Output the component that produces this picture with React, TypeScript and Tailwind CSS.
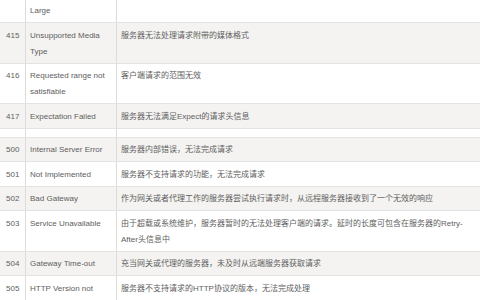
type Row = {
  code: string;
  name: string;
  desc: string;
};

const topRows: Row[] = [
  { code: '414', name: 'Request-URI Too Large', desc: '请求的URI过长（URI通常为网址），服务器无法处理' },
  { code: '415', name: 'Unsupported Media Type', desc: '服务器无法处理请求附带的媒体格式' },
  { code: '416', name: 'Requested range not satisfiable', desc: '客户端请求的范围无效' },
  { code: '417', name: 'Expectation Failed', desc: '服务器无法满足Expect的请求头信息' },
];

const bottomRows: Row[] = [
  { code: '500', name: 'Internal Server Error', desc: '服务器内部错误，无法完成请求' },
  { code: '501', name: 'Not Implemented', desc: '服务器不支持请求的功能，无法完成请求' },
  { code: '502', name: 'Bad Gateway', desc: '作为网关或者代理工作的服务器尝试执行请求时，从远程服务器接收到了一个无效的响应' },
  {
    code: '503',
    name: 'Service Unavailable',
    desc: '由于超载或系统维护，服务器暂时的无法处理客户端的请求。延时的长度可包含在服务器的Retry-After头信息中',
  },
  { code: '504', name: 'Gateway Time-out', desc: '充当网关或代理的服务器，未及时从远端服务器获取请求' },
  { code: '505', name: 'HTTP Version not supported', desc: '服务器不支持请求的HTTP协议的版本，无法完成处理' },
];

function StatusRow({ row, shaded }: { row: Row; shaded: boolean }) {
  return (
    <div
      className={`grid grid-cols-[26px_91px_1fr] border-b border-[#e4e3e1] ${
        shaded ? 'bg-[#f4f3f1]' : 'bg-white'
      }`}
    >
      <div className="border-r border-[#dddcda] pl-[6px] pt-[4.75px] pb-[2.75px]">{row.code}</div>
      <div className="border-r border-[#dddcda] px-[4px] pt-[4.75px] pb-[2.75px]">{row.name}</div>
      <div className="px-[4px] pt-[4.75px] pb-[2.75px]">{row.desc}</div>
    </div>
  );
}

export default function App() {
  return (
    <div className="w-[480px] h-[300px] overflow-hidden bg-white">
      <div className="mt-[-17.5px] text-[8px] leading-[16px] text-[#606060] [font-family:'Liberation_Sans','Noto_Sans_CJK_SC',sans-serif]">
        {topRows.map((row, i) => (
          <StatusRow key={row.code} row={row} shaded={i % 2 === 1} />
        ))}

        {/* spacer between the 4xx and 5xx blocks */}
        <div className="grid h-[9px] grid-cols-[26px_91px_1fr] border-b border-[#e4e3e1] bg-white">
          <div className="border-r border-[#dddcda]" />
          <div className="border-r border-[#dddcda]" />
          <div />
        </div>

        {bottomRows.map((row, i) => (
          <StatusRow key={row.code} row={row} shaded={i % 2 === 0} />
        ))}
      </div>
    </div>
  );
}
